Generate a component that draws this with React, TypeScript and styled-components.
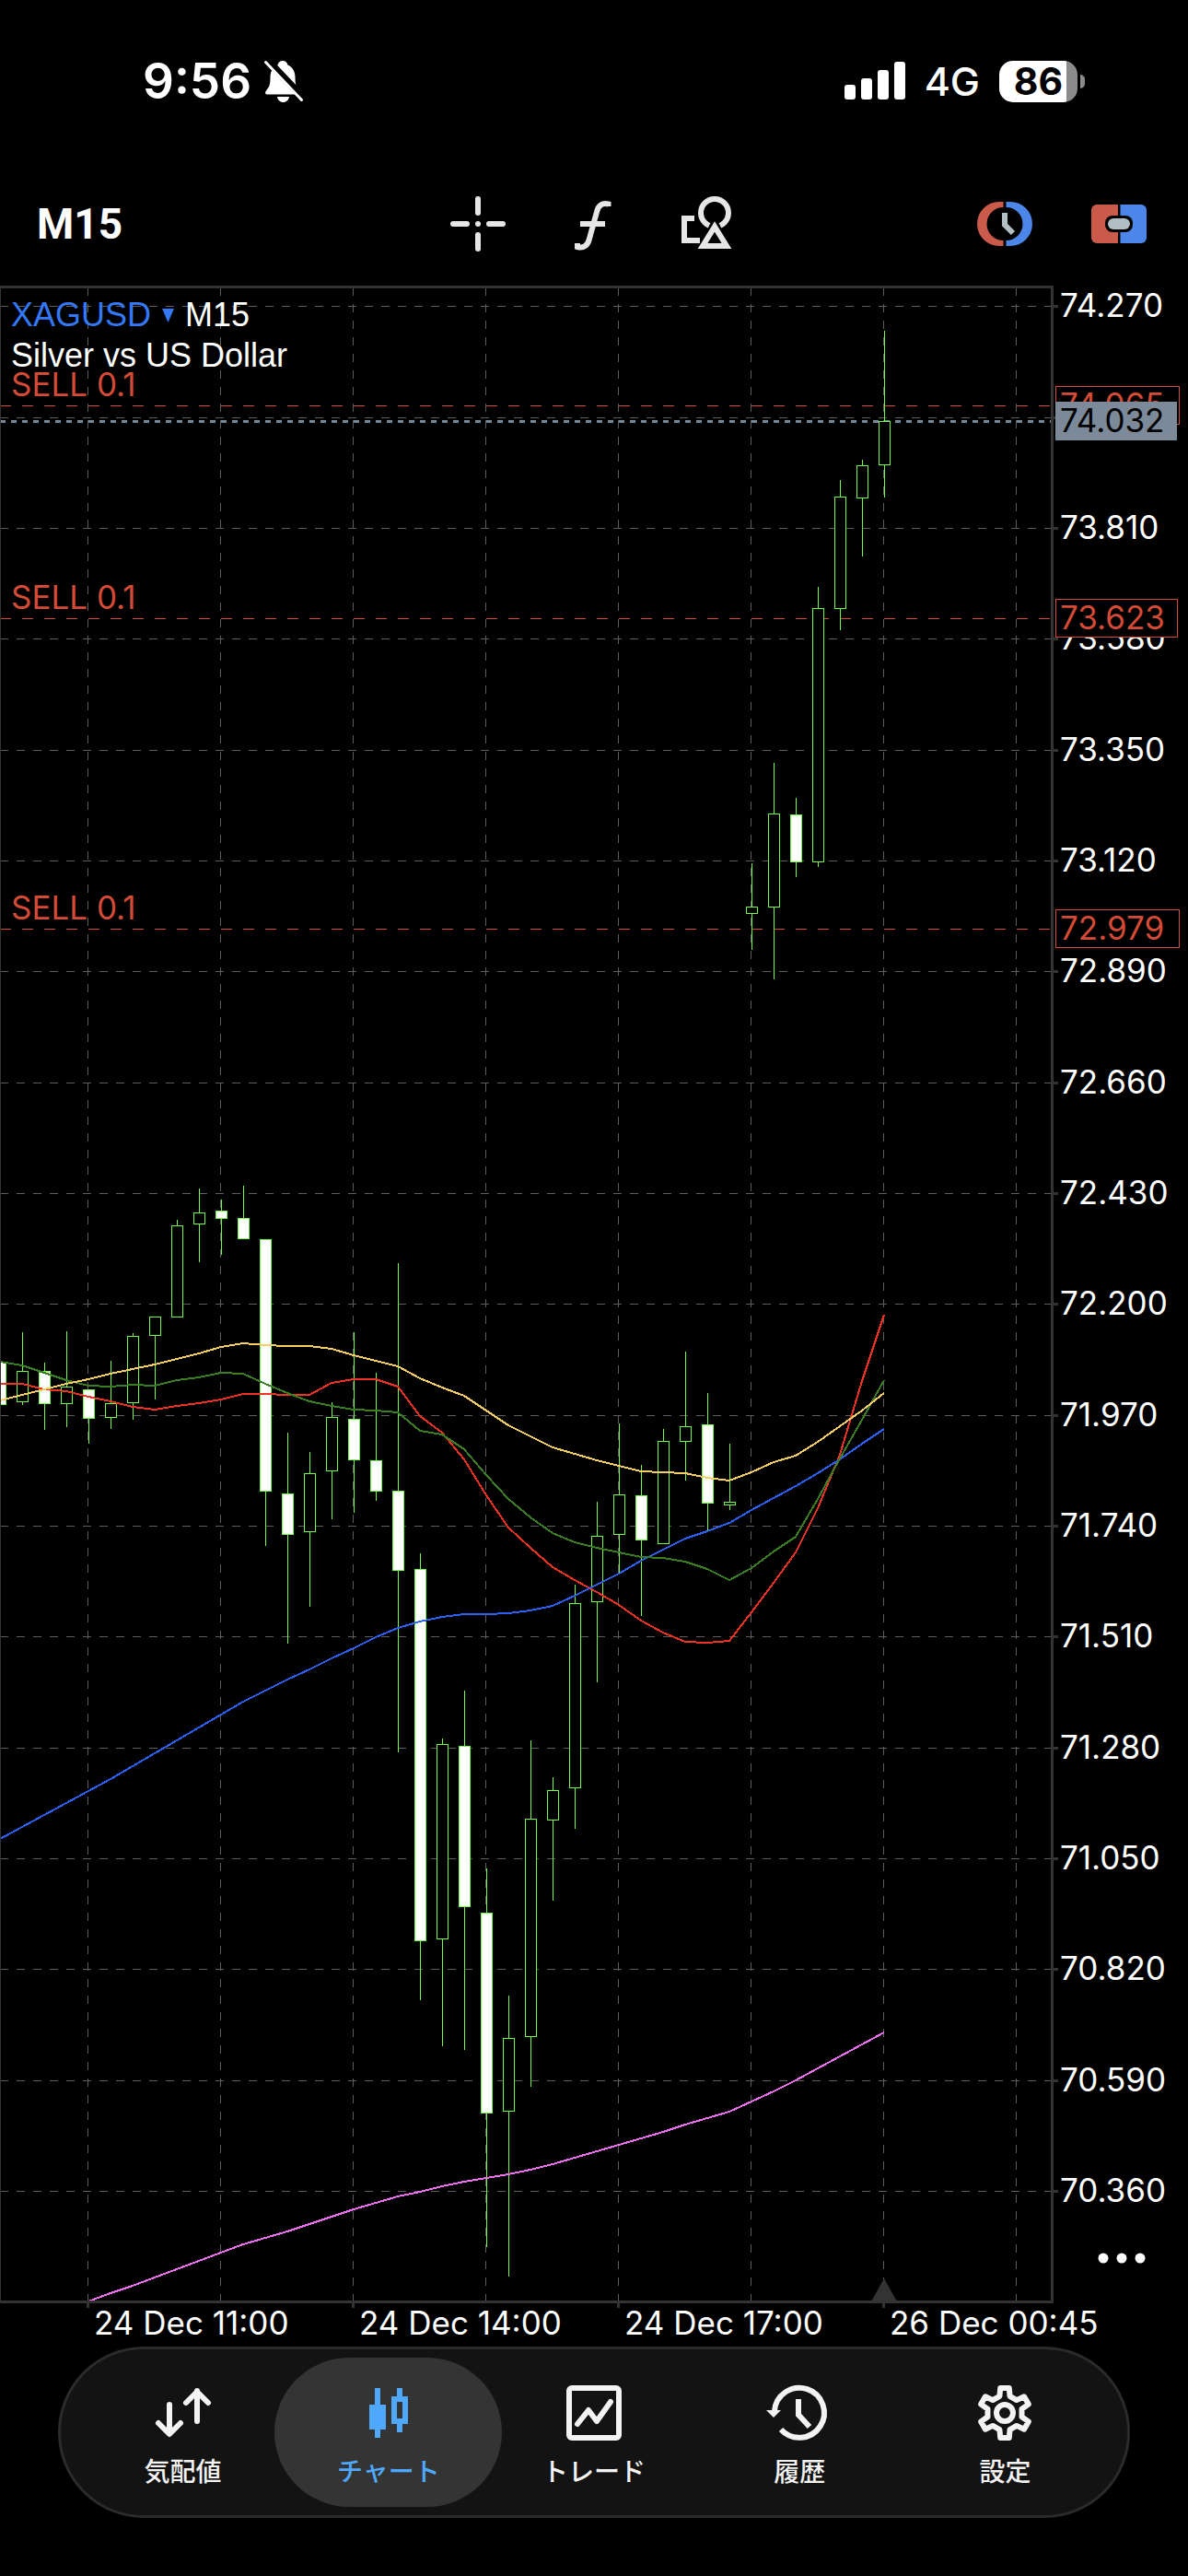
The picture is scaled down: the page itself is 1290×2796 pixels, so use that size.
import React from "react";
import styled, { createGlobalStyle } from "styled-components";

const LATIN = `Inter, "Liberation Sans", sans-serif`;
const HELV = `"Liberation Sans", Arial, sans-serif`;
const CJK = `"Noto Sans CJK JP", "Noto Sans", sans-serif`;

const GlobalStyle = createGlobalStyle`
  *, *::before, *::after { box-sizing: border-box; }
  body { margin: 0; background: #000; }
  button { margin: 0; padding: 0; border: 0; background: none; color: inherit; font: inherit; cursor: pointer; }
  svg { display: block; }
`;

const Page = styled.div`
  display: flex;
  flex-direction: column;
  min-height: 100vh;
  background: #000;
  color: #fff;
  font-family: ${LATIN};
`;

/* ---------- status bar ---------- */

const StatusBar = styled.header`
  display: flex;
  align-items: center;
  justify-content: space-between;
  height: 176px;
  padding: 0 112px 0 155px;
`;

const StatusGroup = styled.div<{ $gap: number }>`
  display: flex;
  align-items: center;
  gap: ${(p) => p.$gap}px;
`;

const Clock = styled.time`
  font-size: 53px;
  font-weight: 600;
  line-height: 64px;
`;

const Network = styled.span`
  font-size: 43px;
  font-weight: 500;
  line-height: 64px;
`;

const Battery = styled.div`
  display: flex;
  align-items: center;
  gap: 3px;
`;

const BatteryBody = styled.div<{ $level: number }>`
  display: flex;
  align-items: center;
  justify-content: center;
  width: 85px;
  height: 45px;
  border-radius: 15px;
  background: linear-gradient(to right, #fff ${(p) => p.$level}%, #8b8b8b ${(p) => p.$level}%);
  color: #000;
  font-size: 41px;
  font-weight: 700;
  line-height: 45px;
`;

const BatteryCap = styled.div`
  width: 5px;
  height: 15px;
  border-radius: 0 5px 5px 0;
  background: #8b8b8b;
`;

/* ---------- toolbar ---------- */

const Toolbar = styled.div`
  display: grid;
  grid-template-columns: 1fr auto 1fr;
  align-items: center;
  height: 134px;
  padding: 0 45px 0 40px;
`;

const TimeframeButton = styled.button`
  justify-self: start;
  color: #fff;
  font-family: Roboto, "Liberation Sans", sans-serif;
  font-size: 46px;
  font-weight: 700;
  line-height: 60px;
`;

const ToolGroup = styled.div<{ $end?: boolean }>`
  display: flex;
  gap: 64px;
  justify-self: ${(p) => (p.$end ? "end" : "center")};
  color: #e6e6e6;
`;

const ToolButton = styled.button`
  width: 60px;
  height: 60px;
`;

/* ---------- chart ---------- */

const ChartArea = styled.main`
  position: relative;
`;

const ChartSvg = styled.svg`
  width: 100%;
  height: auto;
`;

const AxisText = styled.text<{ $tone?: string }>`
  fill: ${(p) => p.$tone || "#fff"};
  font-family: ${LATIN};
  font-size: 35px;
  font-optical-sizing: none;
`;

const ChartHeading = styled.div`
  position: absolute;
  top: 10px;
  left: 12px;
  font-family: ${HELV};
  font-size: 36px;
  line-height: 44px;
`;

const SymbolLine = styled.div`
  display: flex;
  gap: 12px;
`;

const SymbolButton = styled.button`
  display: flex;
  align-items: center;
  gap: 12px;
  color: #3478f6;
`;

const MoreButton = styled.button`
  position: absolute;
  right: 45px;
  bottom: 68px;
  width: 54px;
  height: 44px;
  color: #fff;
`;

/* ---------- tab bar ---------- */

const TabBar = styled.nav`
  display: flex;
  margin: 6px 63px 63px;
  padding: 9px 21px;
  border: 3px solid #2b2b2b;
  border-radius: 93px;
  background: #131313;
`;

const TabSlot = styled.div`
  display: flex;
  flex: 1;
  min-width: 0;
`;

const TabButton = styled.button<{ $active?: boolean }>`
  display: flex;
  flex: 1;
  flex-direction: column;
  align-items: center;
  gap: 6px;
  height: 162px;
  margin: 0 -12px;
  padding-top: 24px;
  border-radius: 81px;
  background: ${(p) => (p.$active ? "#343434" : "transparent")};
  color: ${(p) => (p.$active ? "#4fa8fb" : "#f3f3f3")};
  font-family: ${CJK};
  font-size: 28px;
  font-weight: 500;
  line-height: 40px;
  white-space: nowrap;
`;

/* ---------- chart data ---------- */

const STEP = 24;
const TOP = 312;
const BOTTOM = 2497;
const AXIS_X = 1141;

// [high, body top, body bottom, low, falling]
type Candle = [number, number, number, number, boolean];
const CANDLES: Candle[] = [
  [1478, 1478, 1524, 1524, true],
  [1446, 1488, 1521, 1524, false],
  [1479, 1488, 1523, 1551, true],
  [1445, 1505, 1523, 1548, false],
  [1508, 1508, 1539, 1566, true],
  [1477, 1523, 1538, 1550, false],
  [1447, 1450, 1522, 1540, false],
  [1429, 1429, 1449, 1518, false],
  [1324, 1330, 1429, 1429, false],
  [1290, 1316, 1328, 1369, false],
  [1302, 1314, 1322, 1361, true],
  [1287, 1322, 1344, 1344, true],
  [1345, 1345, 1618, 1677, true],
  [1555, 1621, 1665, 1783, true],
  [1576, 1599, 1662, 1743, false],
  [1522, 1538, 1596, 1648, false],
  [1446, 1540, 1584, 1641, true],
  [1490, 1585, 1618, 1628, true],
  [1371, 1618, 1704, 1901, true],
  [1686, 1703, 2106, 2170, true],
  [1887, 1893, 2104, 2220, false],
  [1835, 1895, 2069, 2224, true],
  [2028, 2076, 2293, 2438, true],
  [2166, 2212, 2291, 2470, false],
  [1889, 1974, 2210, 2264, false],
  [1929, 1943, 1975, 2062, false],
  [1720, 1740, 1940, 1984, false],
  [1630, 1667, 1738, 1825, false],
  [1545, 1622, 1665, 1706, false],
  [1590, 1623, 1671, 1753, true],
  [1551, 1564, 1675, 1675, false],
  [1467, 1548, 1564, 1606, false],
  [1512, 1546, 1631, 1661, true],
  [1567, 1630, 1633, 1638, false],
  [937, 984, 991, 1030, false],
  [828, 883, 984, 1062, false],
  [866, 884, 935, 951, true],
  [637, 660, 935, 940, false],
  [521, 539, 660, 683, false],
  [499, 505, 540, 603, false],
  [359, 457, 504, 539, false],
];

// y of each average, one value per bar starting at `from`
const AVERAGES = [
  {
    color: "#ee6ff2",
    from: 4,
    ys: [2498, 2489, 2481, 2472, 2463, 2454, 2445, 2436, 2429, 2422, 2414, 2406, 2398, 2391, 2384, 2379, 2373, 2368, 2364, 2360, 2355, 2349, 2342, 2335, 2328, 2321, 2314, 2306, 2299, 2292, 2281, 2270, 2258, 2245, 2232, 2219, 2206],
  },
  {
    color: "#ee3323",
    from: 0,
    ys: [1502, 1502, 1508, 1510, 1516, 1521, 1527, 1530, 1526, 1523, 1519, 1513, 1513, 1514, 1514, 1501, 1497, 1497, 1505, 1537, 1555, 1584, 1623, 1658, 1680, 1701, 1715, 1728, 1742, 1759, 1772, 1782, 1783, 1781, 1750, 1718, 1685, 1637, 1579, 1499, 1427],
  },
  {
    color: "#2b61f6",
    from: 0,
    ys: [1996, 1983, 1970, 1957, 1944, 1931, 1917, 1903, 1889, 1875, 1861, 1847, 1835, 1823, 1812, 1800, 1789, 1777, 1767, 1760, 1755, 1752, 1752, 1751, 1748, 1743, 1732, 1720, 1708, 1694, 1682, 1670, 1662, 1653, 1639, 1626, 1613, 1599, 1584, 1567, 1551],
  },
  {
    color: "#3b7d22",
    from: 0,
    ys: [1478, 1482, 1490, 1498, 1504, 1505, 1503, 1504, 1498, 1495, 1490, 1491, 1502, 1512, 1521, 1526, 1530, 1531, 1533, 1553, 1557, 1573, 1601, 1627, 1647, 1664, 1674, 1680, 1685, 1690, 1691, 1695, 1703, 1715, 1702, 1684, 1668, 1627, 1583, 1541, 1498],
  },
  {
    color: "#f6cf60",
    from: 0,
    ys: [1520, 1514, 1508, 1502, 1497, 1491, 1486, 1481, 1475, 1469, 1462, 1458, 1460, 1461, 1461, 1464, 1471, 1477, 1483, 1496, 1506, 1515, 1531, 1547, 1559, 1571, 1578, 1585, 1591, 1597, 1598, 1599, 1604, 1607, 1598, 1587, 1580, 1565, 1548, 1531, 1512],
  },
];

const PRICES = ["74.270", "74.040", "73.810", "73.580", "73.350", "73.120", "72.890", "72.660", "72.430", "72.200", "71.970", "71.740", "71.510", "71.280", "71.050", "70.820", "70.590", "70.360"];
const priceY = (i: number) => Math.floor(332.85 + 120.33 * i);

const GRID_X = [95, 239, 383, 527, 671, 815, 959, 1103];
const TIMES = [
  { x: 95, label: "24 Dec 11:00" },
  { x: 383, label: "24 Dec 14:00" },
  { x: 671, label: "24 Dec 17:00" },
  { x: 959, label: "26 Dec 00:45" },
];

const POSITIONS = [
  { y: 440, label: "SELL 0.1", price: "74.065", width: 134 },
  { y: 671, label: "SELL 0.1", price: "73.623", width: 132 },
  { y: 1008, label: "SELL 0.1", price: "72.979", width: 134 },
];
const RED = "#d34a36";
const LAST = { y: 457, price: "74.032" };

function Grid() {
  return (
    <g stroke="#5e5e5e" strokeDasharray="9 9" shapeRendering="crispEdges">
      {GRID_X.map((x) => (
        <line key={x} x1={x + 0.5} x2={x + 0.5} y1={TOP} y2={BOTTOM} />
      ))}
      {PRICES.map((p, i) => (
        <line key={p} x1={0} x2={AXIS_X} y1={priceY(i) + 0.5} y2={priceY(i) + 0.5} />
      ))}
    </g>
  );
}

function Candles() {
  return (
    <g stroke="#75fa4c" shapeRendering="crispEdges">
      {CANDLES.map(([high, top, bottom, low, falling], i) => {
        const x = i * STEP;
        return (
          <g key={i}>
            {i > 0 && <line x1={x + 0.5} x2={x + 0.5} y1={high} y2={low + 1} />}
            <rect x={x - 5.5} y={top + 0.5} width={12} height={bottom - top} fill={falling ? "#fff" : "#000"} />
          </g>
        );
      })}
    </g>
  );
}

function Chart() {
  return (
    <ChartSvg viewBox="0 310 1290 2231" role="img" aria-label="XAGUSD M15 candlestick chart">
      <Grid />
      {POSITIONS.map((p) => (
        <line key={p.y} x1={0} x2={AXIS_X} y1={p.y + 0.5} y2={p.y + 0.5} stroke={RED} strokeDasharray="12 12" shapeRendering="crispEdges" />
      ))}
      <line x1={0} x2={AXIS_X} y1={LAST.y + 0.5} y2={LAST.y + 0.5} stroke="#778899" strokeWidth={3} strokeDasharray="6 6" shapeRendering="crispEdges" />
      {POSITIONS.map((p) => (
        <AxisText key={p.y} x={12} y={p.y - 10} $tone={RED}>
          {p.label}
        </AxisText>
      ))}
      <path d="M960 2473 L974 2498 H946 Z" fill="#333" />
      <Candles />
      <g fill="none" strokeWidth={2} shapeRendering="crispEdges">
        {AVERAGES.map((a) => (
          <polyline key={a.color} stroke={a.color} points={a.ys.map((y, i) => `${(i + a.from) * STEP},${y}`).join(" ")} />
        ))}
      </g>
      <g fill="#333" shapeRendering="crispEdges">
        <rect x={0} y={310} width={1144} height={3} />
        <rect x={0} y={313} width={1} height={2184} />
        <rect x={AXIS_X} y={312} width={3} height={2187} />
        <rect x={0} y={2497} width={1144} height={3} />
        {PRICES.map((p, i) => (
          <rect key={p} x={1144} y={priceY(i) - 1} width={5} height={3} />
        ))}
        {TIMES.map((t) => (
          <rect key={t.x} x={t.x - 1} y={2500} width={3} height={5} />
        ))}
      </g>
      {PRICES.map((p, i) =>
        p === "74.040" ? null : (
          <AxisText key={p} x={1151} y={priceY(i) + 12}>
            {p}
          </AxisText>
        )
      )}
      {POSITIONS.map((p) => (
        <g key={p.y}>
          <rect x={1146.5} y={p.y - 20.5} width={p.width} height={41} fill="#000" stroke={RED} shapeRendering="crispEdges" />
          <AxisText x={1151} y={p.y + 12} $tone={RED}>
            {p.price}
          </AxisText>
        </g>
      ))}
      <rect x={1146} y={LAST.y - 21} width={132} height={42} fill="#7b8998" />
      <AxisText x={1151} y={LAST.y + 12} $tone="#000">
        {LAST.price}
      </AxisText>
      {TIMES.map((t) => (
        <AxisText key={t.x} x={t.x + 7} y={2534}>
          {t.label}
        </AxisText>
      ))}
    </ChartSvg>
  );
}

/* ---------- icons ---------- */

const BellOffIcon = () => (
  <svg width="44" height="46" viewBox="0 0 44 46" aria-label="Silent mode">
    <path d="M21 1c-3 0-5 2-5.500 4.500C10 8 7.500 13 7.500 19c0 9-1.500 10.500-4.500 14.500-2 2.500-.5 4 1.500 4h33c2.500 0 3.500-1.500 1.500-4-3-4-4.500-5.500-4.500-14.500 0-6-2.500-11-8-13.500C26 3 24 1 21 1Z" fill="#fff" />
    <path d="M15 40h13c-.5 3.500-3 6-6.500 6S15.500 43.500 15 40Z" fill="#fff" />
    <path d="M4 0 44 42" stroke="#000" strokeWidth="8" />
    <path d="M2.500 2.500 41.500 43.500" stroke="#fff" strokeWidth="3" strokeLinecap="round" />
  </svg>
);

const SignalIcon = () => (
  <svg width="66" height="42" viewBox="0 0 66 42" fill="#fff" aria-label="Signal">
    <rect x="0" y="25" width="12" height="16" rx="3" />
    <rect x="18" y="18" width="12" height="23" rx="3" />
    <rect x="36" y="9" width="12" height="32" rx="3" />
    <rect x="54" y="0" width="12" height="41" rx="3" />
  </svg>
);

const CrosshairIcon = () => (
  <svg width="60" height="60" viewBox="0 0 60 60" fill="currentColor">
    <rect x="27" y="0" width="6" height="21" rx="3" />
    <rect x="27" y="39" width="6" height="21" rx="3" />
    <rect x="0" y="27" width="21" height="6" rx="3" />
    <rect x="39" y="27" width="21" height="6" rx="3" />
    <circle cx="30" cy="30" r="3" />
  </svg>
);

const FunctionIcon = () => (
  <svg width="60" height="60" viewBox="0 0 60 60" fill="none" stroke="currentColor" strokeWidth="6">
    <path d="M47.500 11V8.500C41 7 36.500 10 35 17L27 46c-1.500 7-6 11-13 9V51" />
    <path d="M17 30H44" />
  </svg>
);

const ShapesIcon = () => (
  <svg width="60" height="60" viewBox="0 0 60 60" fill="none" stroke="currentColor" strokeWidth="6">
    <path d="M17 24H6V48H23" />
    <circle cx="39" cy="18" r="15" />
    <path d="M39 20 16 66H62Z" fill="#000" stroke="none" />
    <path d="M39 33 26 54H52Z" />
  </svg>
);

const TradeClockIcon = () => (
  <svg width="60" height="60" viewBox="0 0 60 60">
    <path d="M28.500 6H24a24 24 0 0 0 0 48h4.500V48A18 18 0 0 1 28.500 12Z" fill="#ca5b4b" />
    <path d="M31.500 6H36a24 24 0 0 1 0 48h-4.500V48A18 18 0 0 0 31.500 12Z" fill="#4c86e8" />
    <path d="M30 18V31L39 40" fill="none" stroke="#b1bfc5" strokeWidth="6" />
  </svg>
);

const OneClickIcon = () => (
  <svg width="60" height="60" viewBox="0 0 60 60">
    <path d="M29 9H6a6 6 0 0 0-6 6V45a6 6 0 0 0 6 6H29Z" fill="#ca5b4b" />
    <path d="M31.500 9H54a6 6 0 0 1 6 6V45a6 6 0 0 1-6 6H31.500Z" fill="#4c86e8" />
    <rect x="15" y="21" width="30" height="18" rx="8" fill="#000" />
    <rect x="18" y="24" width="24" height="12" rx="6" fill="#b1bfc5" />
  </svg>
);

const QuotesIcon = () => (
  <svg width="72" height="72" viewBox="0 0 72 72" fill="none" stroke="currentColor" strokeWidth="6" strokeLinecap="round" strokeLinejoin="round">
    <path d="M21 27V58M9 47 21 59 33 47" />
    <path d="M51 45V12M39 25 51 13 63 25" />
  </svg>
);

const ChartIcon = () => (
  <svg width="72" height="72" viewBox="0 0 72 72" fill="currentColor">
    <path d="M21 9h6v18h6v27h-6v9h-6v-9h-6V27h6Z" />
    <path d="M45 9h6v9h6v30h-6v9h-6v-9h-6V18h6ZM45 24v18h6V24Z" fillRule="evenodd" />
  </svg>
);

const TradeIcon = () => (
  <svg width="72" height="72" viewBox="0 0 72 72" fill="none" stroke="currentColor" strokeWidth="6" strokeLinejoin="round">
    <rect x="9" y="9" width="54" height="54" rx="3" />
    <path d="M18 48 30 33 39 45 54 24" strokeLinecap="round" />
  </svg>
);

const HistoryIcon = () => (
  <svg width="72" height="72" viewBox="0 0 72 72" fill="none" stroke="currentColor" strokeWidth="6">
    <path d="M9 34A27 27 0 1 1 16 54" />
    <path d="M0 33H16L8 41Z" fill="currentColor" stroke="none" />
    <path d="M35 21V38L47 51" />
  </svg>
);

const gear = (() => {
  const pts: string[] = [];
  for (let i = 0; i < 6; i++) {
    const add = (deg: number, r: number) => {
      const a = ((i * 60 + deg - 90) * Math.PI) / 180;
      pts.push(`${(36 + r * Math.cos(a)).toFixed(2)},${(36 + r * Math.sin(a)).toFixed(2)}`);
    };
    add(-10, 27.5);
    add(10, 27.5);
    add(17, 19);
    add(43, 19);
  }
  return pts.join(" ");
})();

const SettingsIcon = () => (
  <svg width="72" height="72" viewBox="0 0 72 72" fill="none" stroke="currentColor" strokeWidth="6" strokeLinejoin="round">
    <polygon points={gear} />
    <circle cx="36" cy="36" r="9" />
  </svg>
);

const TABS = [
  { label: "気配値", Icon: QuotesIcon },
  { label: "チャート", Icon: ChartIcon, active: true },
  { label: "トレード", Icon: TradeIcon },
  { label: "履歴", Icon: HistoryIcon },
  { label: "設定", Icon: SettingsIcon },
];

export default function App() {
  return (
    <Page>
      <GlobalStyle />
      <StatusBar>
        <StatusGroup $gap={13}>
          <Clock>9:56</Clock>
          <BellOffIcon />
        </StatusGroup>
        <StatusGroup $gap={21}>
          <SignalIcon />
          <Network>4G</Network>
          <Battery>
            <BatteryBody $level={86}>86</BatteryBody>
            <BatteryCap />
          </Battery>
        </StatusGroup>
      </StatusBar>
      <Toolbar>
        <TimeframeButton>M15</TimeframeButton>
        <ToolGroup>
          <ToolButton aria-label="Crosshair"><CrosshairIcon /></ToolButton>
          <ToolButton aria-label="Indicators"><FunctionIcon /></ToolButton>
          <ToolButton aria-label="Objects"><ShapesIcon /></ToolButton>
        </ToolGroup>
        <ToolGroup $end>
          <ToolButton aria-label="Trading hours"><TradeClockIcon /></ToolButton>
          <ToolButton aria-label="One-click trading"><OneClickIcon /></ToolButton>
        </ToolGroup>
      </Toolbar>
      <ChartArea>
        <Chart />
        <ChartHeading>
          <SymbolLine>
            <SymbolButton>
              XAGUSD
              <svg width="13" height="15" viewBox="0 0 13 15" fill="currentColor" aria-hidden="true">
                <path d="M0 0H13L6.500 15Z" />
              </svg>
            </SymbolButton>
            <span>M15</span>
          </SymbolLine>
          <div>Silver vs US Dollar</div>
        </ChartHeading>
        <MoreButton aria-label="More">
          <svg width="54" height="44" viewBox="0 0 54 44" fill="currentColor">
            <circle cx="7" cy="22" r="5.500" />
            <circle cx="27" cy="22" r="5.500" />
            <circle cx="47" cy="22" r="5.500" />
          </svg>
        </MoreButton>
      </ChartArea>
      <TabBar>
        {TABS.map(({ label, Icon, active }) => (
          <TabSlot key={label}>
            <TabButton $active={active} aria-current={active ? "page" : undefined}>
              <Icon />
              {label}
            </TabButton>
          </TabSlot>
        ))}
      </TabBar>
    </Page>
  );
}
